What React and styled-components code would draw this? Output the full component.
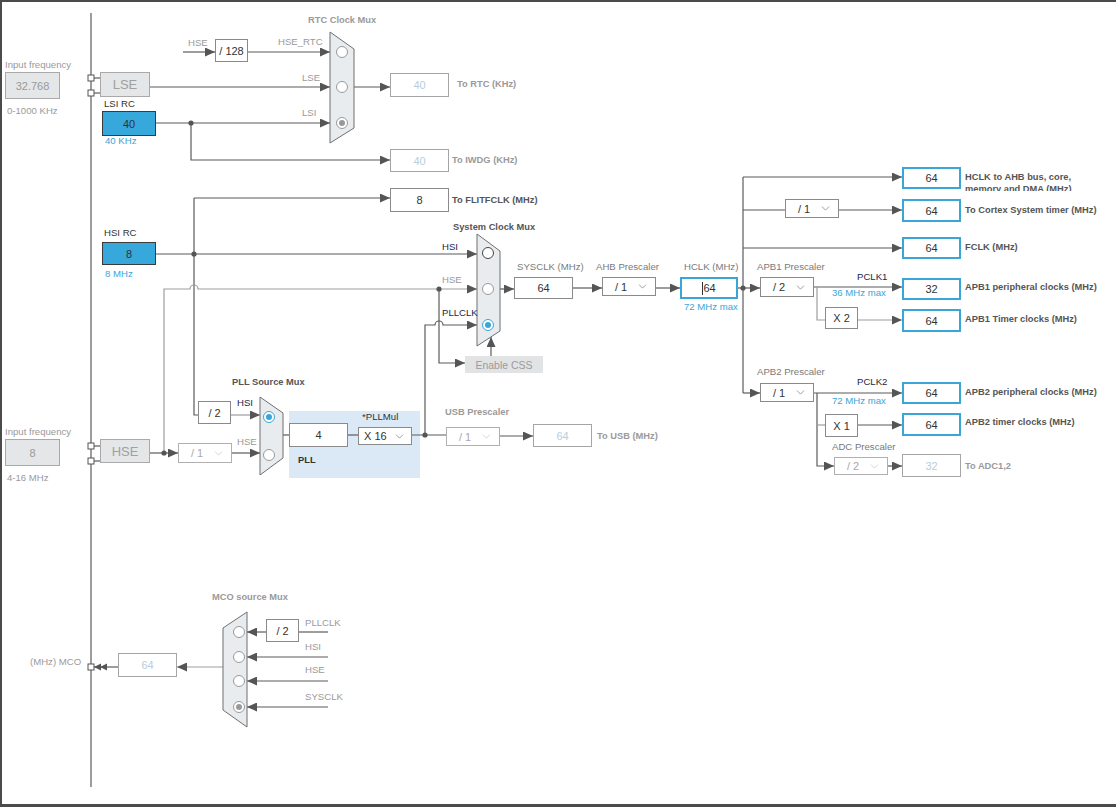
import React from 'react';
import styled, { createGlobalStyle, css } from 'styled-components';
import { ChevronDown } from 'lucide-react';

const GlobalStyle = createGlobalStyle`
  html, body {
    margin: 0;
    padding: 0;
    background: #fff;
  }
  body {
    font-family: 'Liberation Sans', Arial, sans-serif;
  }
`;

const Frame = styled.div`
  position: relative;
  width: 1116px;
  height: 807px;
  overflow: hidden;
  background: #fff;
  box-shadow: inset 2px 2px 0 #4b4b4b, inset 0 -3px 0 #4b4b4b;
`;

const Wires = styled.svg`
  position: absolute;
  left: 0;
  top: 0;
  width: 1116px;
  height: 807px;
  pointer-events: none;
`;

const PllZone = styled.div`
  position: absolute;
  left: 289px;
  top: 411px;
  width: 131px;
  height: 67px;
  background: #dbe8f5;
`;

const tones = {
  grey: css`color: #9a9a9a;`,
  mid: css`color: #7a7a7a;`,
  dark: css`color: #333;`,
  navy: css`color: #1c2747;`,
  blue: css`color: #3ba5d9;`,
  out: css`color: #555;`,
};

const Label = styled.span`
  position: absolute;
  left: ${(p) => p.$x}px;
  top: ${(p) => p.$y - 6}px;
  line-height: 12px;
  font-size: ${(p) => (p.$bold ? '9.3px' : '9.6px')};
  font-weight: ${(p) => (p.$bold ? 700 : 400)};
  white-space: nowrap;
  ${(p) => tones[p.$tone || 'grey']}
`;

const Clipped = styled(Label)`
  white-space: normal;
  width: 112px;
  height: 20px;
  overflow: hidden;
`;

const boxKinds = {
  input: css`
    background: #e4e6e8;
    border: 1px solid #a9a9a9;
    color: #9a9a9a;
    font-size: 11px;
  `,
  osc: css`
    background: #e4e6e8;
    border: 1px solid #a9a9a9;
    color: #a0a0a0;
    font-size: 13px;
  `,
  source: css`
    background: #36a8db;
    border: 1px solid #3a3a3a;
    color: #333;
    font-size: 11px;
  `,
  plain: css`
    background: #fff;
    border: 1px solid #8a8a8a;
    color: #333;
    font-size: 11px;
  `,
  disabled: css`
    background: #fff;
    border: 1px solid #a5a5a5;
    color: #b7cde0;
    font-size: 11px;
  `,
  output: css`
    background: #fff;
    border: 2px solid #3aa6d8;
    color: #333;
    font-size: 11px;
  `,
  button: css`
    background: #e1e3e5;
    border: none;
    color: #9b9b9b;
    font-size: 10.5px;
  `,
};

const Box = styled.div`
  position: absolute;
  left: ${(p) => p.$x}px;
  top: ${(p) => p.$y}px;
  width: ${(p) => p.$w}px;
  height: ${(p) => p.$h}px;
  box-sizing: border-box;
  display: flex;
  align-items: center;
  justify-content: center;
  ${(p) => boxKinds[p.$kind]}
`;

const Caret = styled.span`
  display: inline-block;
  width: 1px;
  height: 13px;
  background: #333;
`;

const Select = styled.div`
  position: absolute;
  left: ${(p) => p.$x}px;
  top: ${(p) => p.$y}px;
  width: 54px;
  height: ${(p) => p.$h}px;
  box-sizing: border-box;
  display: flex;
  align-items: center;
  justify-content: space-between;
  padding: ${(p) => (p.$tight ? '0 5px 0 5px' : '0 6px 0 12px')};
  background: #fff;
  border: 1px solid ${(p) => (p.$off ? '#b0b0b0' : '#8a8a8a')};
  color: ${(p) => (p.$off ? '#a8a8a8' : '#333')};
  font-size: 11px;
  white-space: nowrap;
`;

const boxes = [
  { x: 5, y: 72, w: 55, h: 27, kind: 'input', text: '32.768' },
  { x: 100, y: 72, w: 50, h: 25, kind: 'osc', text: 'LSE' },
  { x: 102, y: 111, w: 54, h: 25, kind: 'source', text: '40' },
  { x: 215, y: 39, w: 33, h: 23, kind: 'plain', text: '/ 128' },
  { x: 390, y: 73, w: 59, h: 24, kind: 'disabled', text: '40' },
  { x: 390, y: 149, w: 59, h: 23, kind: 'disabled', text: '40' },
  { x: 390, y: 188, w: 59, h: 24, kind: 'plain', text: '8' },
  { x: 102, y: 242, w: 54, h: 23, kind: 'source', text: '8' },
  { x: 198, y: 401, w: 33, h: 23, kind: 'plain', text: '/ 2' },
  { x: 5, y: 439, w: 55, h: 27, kind: 'input', text: '8' },
  { x: 100, y: 439, w: 50, h: 24, kind: 'osc', text: 'HSE' },
  { x: 289, y: 423, w: 59, h: 24, kind: 'plain', text: '4' },
  { x: 465, y: 356, w: 78, h: 17, kind: 'button', text: 'Enable CSS' },
  { x: 514, y: 277, w: 59, h: 22, kind: 'plain', text: '64' },
  { x: 533, y: 424, w: 59, h: 23, kind: 'disabled', text: '64' },
  { x: 902, y: 167, w: 59, h: 22, kind: 'output', text: '64' },
  { x: 902, y: 199, w: 59, h: 23, kind: 'output', text: '64' },
  { x: 902, y: 237, w: 59, h: 22, kind: 'output', text: '64' },
  { x: 902, y: 278, w: 59, h: 22, kind: 'output', text: '32' },
  { x: 902, y: 309, w: 59, h: 23, kind: 'output', text: '64' },
  { x: 902, y: 382, w: 59, h: 22, kind: 'output', text: '64' },
  { x: 902, y: 413, w: 59, h: 23, kind: 'output', text: '64' },
  { x: 902, y: 454, w: 59, h: 23, kind: 'disabled', text: '32' },
  { x: 825, y: 307, w: 33, h: 22, kind: 'plain', text: 'X 2' },
  { x: 825, y: 414, w: 33, h: 23, kind: 'plain', text: 'X 1' },
  { x: 266, y: 619, w: 33, h: 23, kind: 'plain', text: '/ 2' },
  { x: 118, y: 653, w: 59, h: 24, kind: 'disabled', text: '64' },
];

const selects = [
  { x: 178, y: 443, h: 20, text: '/ 1', off: true },
  { x: 358, y: 427, h: 18, text: 'X 16', tight: true },
  { x: 446, y: 427, h: 19, text: '/ 1', off: true },
  { x: 602, y: 277, h: 19, text: '/ 1' },
  { x: 785, y: 199, h: 19, text: '/ 1' },
  { x: 760, y: 277, h: 20, text: '/ 2' },
  { x: 760, y: 383, h: 19, text: '/ 1' },
  { x: 834, y: 457, h: 18, text: '/ 2', off: true },
];

const labels = [
  { x: 308, y: 20, text: 'RTC Clock Mux', bold: true },
  { x: 5, y: 65, text: 'Input frequency' },
  { x: 7, y: 111, text: '0-1000 KHz' },
  { x: 188, y: 43, text: 'HSE' },
  { x: 278, y: 42, text: 'HSE_RTC' },
  { x: 302, y: 78, text: 'LSE' },
  { x: 302, y: 113, text: 'LSI' },
  { x: 104, y: 104, text: 'LSI RC', tone: 'dark' },
  { x: 105, y: 141, text: '40 KHz', tone: 'blue' },
  { x: 457, y: 84, text: 'To RTC (KHz)', bold: true },
  { x: 452, y: 160, text: 'To IWDG (KHz)', bold: true },
  { x: 452, y: 200, text: 'To FLITFCLK (MHz)', bold: true, tone: 'out' },
  { x: 104, y: 233, text: 'HSI RC', tone: 'dark' },
  { x: 105, y: 274, text: '8 MHz', tone: 'blue' },
  { x: 453, y: 227, text: 'System Clock Mux', bold: true, tone: 'out' },
  { x: 442, y: 247, text: 'HSI', tone: 'navy' },
  { x: 442, y: 280, text: 'HSE' },
  { x: 442, y: 313, text: 'PLLCLK', tone: 'navy' },
  { x: 517, y: 267, text: 'SYSCLK (MHz)', tone: 'mid' },
  { x: 596, y: 267, text: 'AHB Prescaler', tone: 'mid' },
  { x: 684, y: 267, text: 'HCLK (MHz)', tone: 'mid' },
  { x: 684, y: 307, text: '72 MHz max', tone: 'blue' },
  { x: 232, y: 382, text: 'PLL Source Mux', bold: true, tone: 'out' },
  { x: 237, y: 403, text: 'HSI', tone: 'navy' },
  { x: 237, y: 442, text: 'HSE' },
  { x: 362, y: 417, text: '*PLLMul', tone: 'dark' },
  { x: 298, y: 460, text: 'PLL', bold: true, tone: 'dark' },
  { x: 5, y: 432, text: 'Input frequency' },
  { x: 7, y: 478, text: '4-16 MHz' },
  { x: 445, y: 412, text: 'USB Prescaler', bold: true },
  { x: 597, y: 436, text: 'To USB (MHz)', bold: true },
  { x: 757, y: 267, text: 'APB1 Prescaler', tone: 'mid' },
  { x: 857, y: 277, text: 'PCLK1', tone: 'navy' },
  { x: 832, y: 293, text: '36 MHz max', tone: 'blue' },
  { x: 757, y: 372, text: 'APB2 Prescaler', tone: 'mid' },
  { x: 857, y: 382, text: 'PCLK2', tone: 'navy' },
  { x: 832, y: 401, text: '72 MHz max', tone: 'blue' },
  { x: 832, y: 447, text: 'ADC Prescaler', tone: 'mid' },
  { x: 965, y: 466, text: 'To ADC1,2', bold: true },
  { x: 965, y: 210, text: 'To Cortex System timer (MHz)', bold: true, tone: 'out' },
  { x: 965, y: 247, text: 'FCLK (MHz)', bold: true, tone: 'out' },
  { x: 965, y: 287, text: 'APB1 peripheral clocks (MHz)', bold: true, tone: 'out' },
  { x: 965, y: 319, text: 'APB1 Timer clocks (MHz)', bold: true, tone: 'out' },
  { x: 965, y: 392, text: 'APB2 peripheral clocks (MHz)', bold: true, tone: 'out' },
  { x: 965, y: 422, text: 'APB2 timer clocks (MHz)', bold: true, tone: 'out' },
  { x: 212, y: 597, text: 'MCO source Mux', bold: true },
  { x: 305, y: 623, text: 'PLLCLK' },
  { x: 305, y: 647, text: 'HSI' },
  { x: 305, y: 670, text: 'HSE' },
  { x: 305, y: 697, text: 'SYSCLK' },
  { x: 30, y: 662, text: '(MHz) MCO' },
];

const DARK = '#5b5b5b';
const LIGHT = '#9d9d9d';

// d, arrow at end, colour
const wires = [
  ['M91,13 V787', false],
  ['M183,52 H215', true],
  ['M248,52 H330', true],
  ['M150,87 H330', true],
  ['M156,123 H330', true],
  ['M191,123 V160 H390', true],
  ['M354,87 H390', true],
  ['M94,78 H100', false],
  ['M94,93 H100', false],
  ['M94,446 H100', false],
  ['M94,461 H100', false],
  ['M194,198 H390', true],
  ['M156,254 H477', true],
  ['M194,198 V415 H198', false],
  ['M231,415 H260', true, LIGHT],
  ['M150,453 H178', true],
  ['M164,453 V289 H190 a4,4 0 0 1 8,0 H477', true, LIGHT],
  ['M232,453 H260', true],
  ['M283,435 H289', false],
  ['M348,435 H358', false],
  ['M412,435 H446', false],
  ['M425,435 V325 H435 a4,4 0 0 1 8,0 H477', true],
  ['M439,289 V363 H465', true],
  ['M491,356 V337', true],
  ['M500,289 H514', true],
  ['M573,288 H602', true],
  ['M656,288 H680', true],
  ['M500,436 H533', true],
  ['M738,288 H760', true],
  ['M743,177 V393', false],
  ['M743,177 H902', true],
  ['M743,210 H785', false],
  ['M839,210 H902', true],
  ['M743,248 H902', true],
  ['M743,393 H760', true],
  ['M814,287 H902', true],
  ['M817,287 V320 H825', false, LIGHT],
  ['M858,320 H902', true, LIGHT],
  ['M814,393 H902', true],
  ['M817,393 V466 H834', true],
  ['M817,425 H825', false, LIGHT],
  ['M858,425 H902', true],
  ['M888,466 H902', true],
  ['M328,632 H299', false],
  ['M266,632 H247', true],
  ['M328,657 H247', true],
  ['M328,681 H247', true],
  ['M328,707 H247', true],
  ['M223,667 H177', true, LIGHT],
  ['M118,667 H94', false],
];

const dots = [
  [191, 123], [194, 254], [164, 453], [439, 289], [425, 435], [743, 288],
];

const ports = [
  [91, 78], [91, 93], [91, 446], [91, 461], [91, 667],
];

const Mux = ({ points, radios }) => (
  <g>
    <polygon points={points} fill="#e9ecef" stroke="#6f6f6f" strokeWidth="1" />
    {radios.map(([cx, cy, state]) => (
      <g key={cy}>
        <circle
          cx={cx}
          cy={cy}
          r="5.5"
          fill="#fff"
          stroke={state === 'on' ? '#3aa6d8' : state === 'dark' ? '#444' : '#9a9a9a'}
          strokeWidth="1"
        />
        {(state === 'on' || state === 'sel') && (
          <circle cx={cx} cy={cy} r="3" fill={state === 'on' ? '#3aa6d8' : '#999'} />
        )}
      </g>
    ))}
  </g>
);

const App = () => {
  return (
    <>
      <GlobalStyle />
      <Frame>
        <PllZone />
        <Wires viewBox="0 0 1116 807">
          <defs>
            <marker
              id="head"
              markerUnits="userSpaceOnUse"
              markerWidth="11"
              markerHeight="9"
              refX="10"
              refY="4.5"
              orient="auto"
            >
              <path d="M0,0 L10,4.5 L0,9 z" fill="#555" />
            </marker>
          </defs>
          {wires.map(([d, arrow, color], i) => (
            <path
              key={i}
              d={d}
              fill="none"
              stroke={color || DARK}
              strokeWidth="1.2"
              markerEnd={arrow ? 'url(#head)' : undefined}
            />
          ))}
          {dots.map(([cx, cy]) => (
            <circle key={`${cx}-${cy}`} cx={cx} cy={cy} r="2.6" fill="#555" />
          ))}
          {ports.map(([cx, cy]) => (
            <rect
              key={cy}
              x={cx - 3}
              y={cy - 3}
              width="6"
              height="6"
              fill="#fff"
              stroke="#555"
              strokeWidth="1"
            />
          ))}
          <polygon points="94,667 101,663.5 101,670.5" fill="#555" />
          <polygon points="100,667 107,663.5 107,670.5" fill="#555" />
          <Mux
            points="330,32 354,49 354,128 330,143"
            radios={[[342, 52, 'off'], [342, 87, 'off'], [342, 123, 'sel']]}
          />
          <Mux
            points="477,234 500,251 500,331 477,346"
            radios={[[488, 253, 'dark'], [488, 289, 'off'], [488, 325, 'on']]}
          />
          <Mux
            points="260,397 283,413 283,458 260,475"
            radios={[[269, 417, 'on'], [269, 455, 'off']]}
          />
          <Mux
            points="223,628 247,612 247,727 223,710"
            radios={[[239, 632, 'off'], [239, 657, 'off'], [239, 681, 'off'], [239, 707, 'sel']]}
          />
        </Wires>

        {boxes.map((b, i) => (
          <Box key={i} $x={b.x} $y={b.y} $w={b.w} $h={b.h} $kind={b.kind}>
            {b.text}
          </Box>
        ))}
        <Box $x={680} $y={277} $w={58} $h={22} $kind="output">
          <Caret />
          64
        </Box>

        {selects.map((s, i) => (
          <Select key={i} $x={s.x} $y={s.y} $h={s.h} $off={s.off} $tight={s.tight}>
            <span>{s.text}</span>
            <ChevronDown size={13} strokeWidth={1.3} color={s.off ? '#c4c4c4' : '#777'} />
          </Select>
        ))}

        {labels.map((l, i) => (
          <Label key={i} $x={l.x} $y={l.y} $bold={l.bold} $tone={l.tone}>
            {l.text}
          </Label>
        ))}
        <Clipped $x={965} $y={177} $bold $tone="out">
          HCLK to AHB bus, core, memory and DMA (MHz)
        </Clipped>
      </Frame>
    </>
  );
};

export default App;
